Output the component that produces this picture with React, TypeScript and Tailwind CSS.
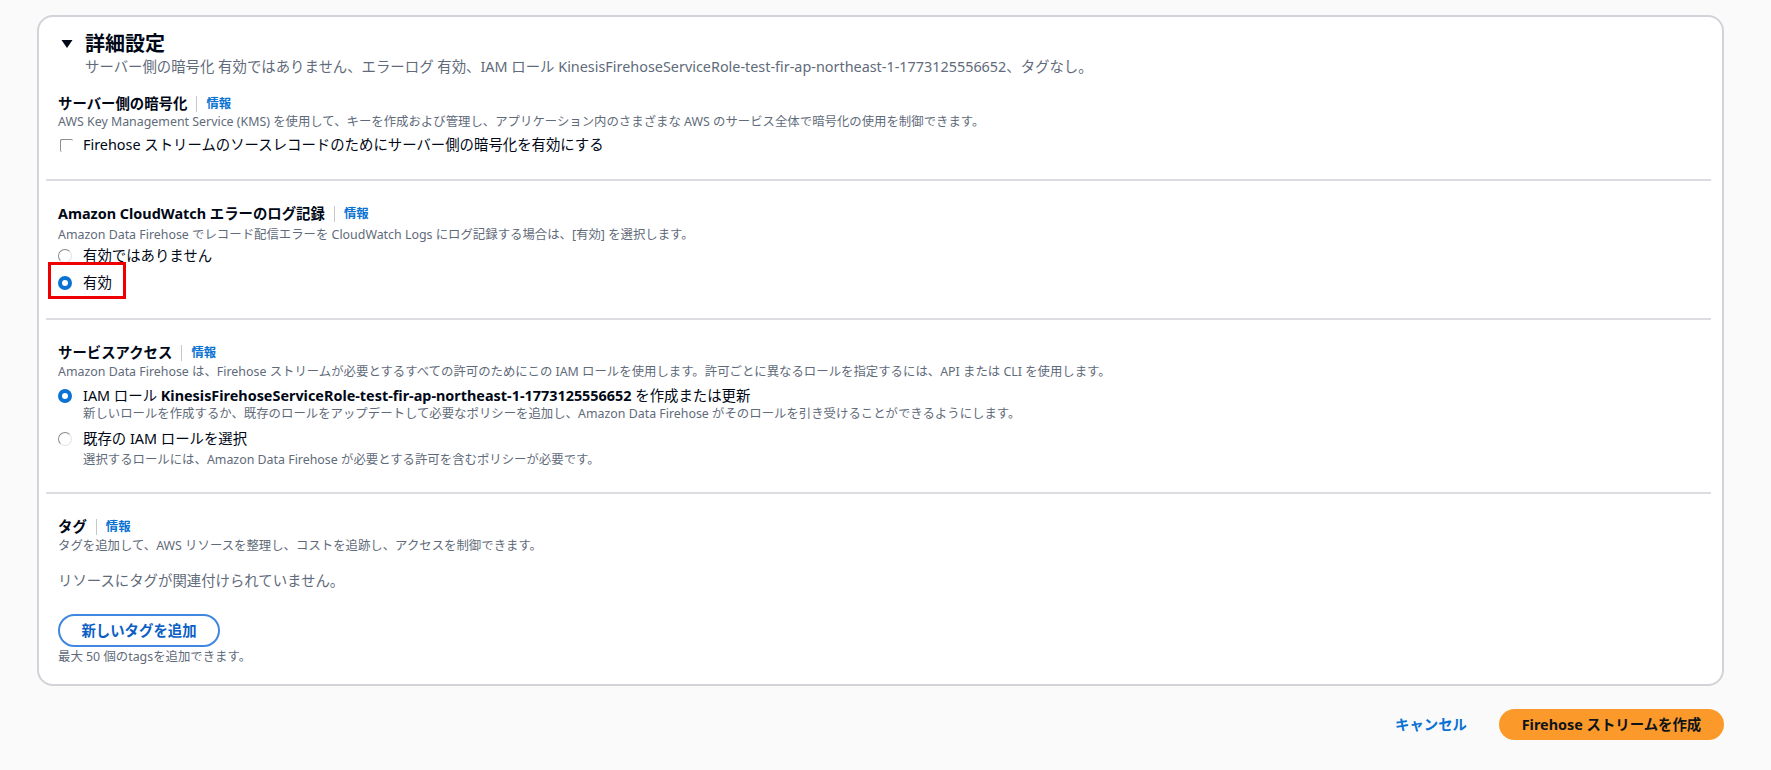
import React from "react";

function InfoHeader({ title }: { title: string }) {
  return (
    <div className="flex h-[18px] items-center leading-[18px]">
      <span className="text-[14.4px] font-bold text-[#000716]">{title}</span>
      <span className="mx-[9px] h-[16px] w-px bg-[#c6c6cd]" />
      <span className="text-[12.4px] font-bold text-[#0972d3]">情報</span>
    </div>
  );
}

function Desc({ children, className = "" }: { children: React.ReactNode; className?: string }) {
  return <div className={`text-[12.4px] leading-[16px] text-[#5f6b7a] ${className}`}>{children}</div>;
}

function RadioOn() {
  return <span className="block h-[14px] w-[14px] shrink-0 rounded-full border-[4px] border-[#0972d3] bg-white" />;
}

function RadioOff() {
  return (
    <span className="block h-[14px] w-[14px] shrink-0 rounded-full border-[1.5px] border-[#8c8c94] border-r-[#e4e4e8] border-b-[#e4e4e8] bg-white" />
  );
}

function Divider() {
  return <div className="h-[2px] w-full bg-[#dcdce1]" />;
}

export default function App() {
  return (
    <div className="min-h-[770px] w-[1771px] bg-[#fafafa] pl-[37px] pt-[15px] font-['Noto_Sans','Noto_Sans_CJK_JP',sans-serif] text-[#000716]">
      <div className="h-[671px] w-[1687px] rounded-[16px] border-2 border-[#d2d2d8] bg-white pl-[7px] pr-[11px] pt-[15px]">
        {/* Header */}
        <div className="px-[12px]">
          <div className="flex h-[24px] items-center">
            <svg width="12" height="10" viewBox="0 0 12 10" className="ml-[3px] mr-[12px]">
              <path d="M0.5 1 L11.5 1 L6 9 Z" fill="#000716" />
            </svg>
            <span className="text-[20px] font-bold leading-[24px]">詳細設定</span>
          </div>
          <div className="ml-[27px] mt-[2px] text-[14.4px] leading-[18px] text-[#5f6b7a]">
            サーバー側の暗号化 有効ではありません、エラーログ 有効、IAM ロール KinesisFirehoseServiceRole-test-fir-ap-northeast-1-1773125556652、タグなし。
          </div>
        </div>

        {/* Section 1 */}
        <div className="px-[12px] pb-[24px] pt-[19px]">
          <InfoHeader title="サーバー側の暗号化" />
          <Desc className="mt-[1px]">
            AWS Key Management Service (KMS) を使用して、キーを作成および管理し、アプリケーション内のさまざまな AWS のサービス全体で暗号化の使用を制御できます。
          </Desc>
          <div className="mt-[5px] flex h-[20px] items-center">
            <span className="ml-[2px] block h-[13px] w-[13px] shrink-0 rounded-[2px] border-l-[1.5px] border-t-[1.5px] border-[#8c8c94]" />
            <span className="ml-[10px] text-[14.4px] leading-[20px]">
              Firehose ストリームのソースレコードのためにサーバー側の暗号化を有効にする
            </span>
          </div>
        </div>
        <Divider />

        {/* Section 2 */}
        <div className="px-[12px] pb-[25px] pt-[24px]">
          <InfoHeader title="Amazon CloudWatch エラーのログ記録" />
          <Desc className="mt-[4px]">
            Amazon Data Firehose でレコード配信エラーを CloudWatch Logs にログ記録する場合は、[有効] を選択します。
          </Desc>
          <div className="mt-[3px] flex h-[20px] items-center gap-[11px]">
            <RadioOff />
            <span className="text-[14.4px] leading-[20px]">有効ではありません</span>
          </div>
          <div className="relative mt-[7px] flex h-[20px] items-center gap-[11px]">
            <RadioOn />
            <span className="text-[14.4px] leading-[20px]">有効</span>
            <div className="absolute left-[-10px] top-[-11px] h-[37px] w-[78px] border-[3px] border-[#ee0000]" />
          </div>
        </div>
        <Divider />

        {/* Section 3 */}
        <div className="px-[12px] pb-[24px] pt-[24px]">
          <InfoHeader title="サービスアクセス" />
          <Desc className="mt-[2px]">
            Amazon Data Firehose は、Firehose ストリームが必要とするすべての許可のためにこの IAM ロールを使用します。許可ごとに異なるロールを指定するには、API または CLI を使用します。
          </Desc>
          <div className="mt-[6px] flex h-[20px] items-center gap-[11px]">
            <RadioOn />
            <span className="text-[14.4px] leading-[20px]">
              IAM ロール <span className="font-bold">KinesisFirehoseServiceRole-test-fir-ap-northeast-1-1773125556652</span> を作成または更新
            </span>
          </div>
          <Desc className="ml-[25px]">
            新しいロールを作成するか、既存のロールをアップデートして必要なポリシーを追加し、Amazon Data Firehose がそのロールを引き受けることができるようにします。
          </Desc>
          <div className="mt-[7px] flex h-[20px] items-center gap-[11px]">
            <RadioOff />
            <span className="text-[14.4px] leading-[20px]">既存の IAM ロールを選択</span>
          </div>
          <Desc className="ml-[25px] mt-[3px]">
            選択するロールには、Amazon Data Firehose が必要とする許可を含むポリシーが必要です。
          </Desc>
        </div>
        <Divider />

        {/* Section 4 */}
        <div className="px-[12px] pt-[24px]">
          <InfoHeader title="タグ" />
          <Desc className="mt-[2px]">
            タグを追加して、AWS リソースを整理し、コストを追跡し、アクセスを制御できます。
          </Desc>
          <div className="mt-[17px] text-[14.4px] leading-[20px] text-[#5f6b7a]">
            リソースにタグが関連付けられていません。
          </div>
          <button className="mt-[23px] flex h-[33px] w-[162px] items-center justify-center rounded-full border-2 border-[#3f87e0] bg-white text-[14.4px] font-bold text-[#0b5fc4]">
            新しいタグを追加
          </button>
          <Desc className="mt-[2px]">最大 50 個のtagsを追加できます。</Desc>
        </div>
      </div>

      {/* Footer */}
      <div className="mt-[23px] flex w-[1687px] items-center justify-end">
        <span className="mr-[32px] text-[14.4px] font-bold text-[#0972d3]">キャンセル</span>
        <button className="flex h-[31px] w-[225px] items-center justify-center rounded-full bg-[#fb9a2a] text-[14.4px] font-bold text-[#0f141a]">
          Firehose ストリームを作成
        </button>
      </div>
    </div>
  );
}
